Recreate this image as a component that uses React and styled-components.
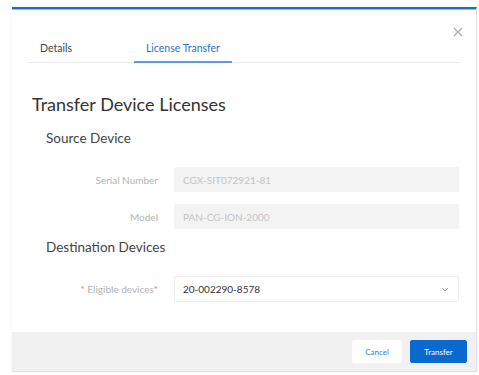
import React from "react";
import styled, { createGlobalStyle } from "styled-components";

const Global = createGlobalStyle`
  html, body { margin: 0; padding: 0; background: #fff; }
  body { font-family: Lato, "Open Sans", sans-serif; }
  * { box-sizing: border-box; }
`;

const Page = styled.div`
  width: 479px;
  height: 375px;
  padding: 7px 2px 0 12px;
  background: #fff;
`;

const Modal = styled.div`
  width: 465px;
  border-top: 2px solid #1b6dcc;
  border-right: 1px solid #e2e2e2;
  box-shadow: 0 1px 1px rgba(0, 0, 0, 0.12), inset 0 1px 0 #8fb9ea;
  background: #fff;
  display: flex;
  flex-direction: column;
`;

const CloseRow = styled.div`
  display: flex;
  justify-content: flex-end;
  padding: 17px 12px 0 0;
  height: 28px;
`;

const CloseButton = styled.button`
  border: 0;
  background: none;
  padding: 0;
  width: 12px;
  height: 12px;
  display: flex;
  align-items: center;
  justify-content: center;
  cursor: pointer;
`;

const TabBar = styled.div`
  display: flex;
  gap: 50px;
  margin: 0 16px;
  border-bottom: 1px solid #ececec;
  height: 26px;
`;

const Tab = styled.div`
  padding: 0 12px;
  font-size: 10.5px;
  line-height: 22px;
  color: ${(p) => (p.$active ? "#2c72d0" : "#444")};
  border-bottom: 2px solid ${(p) => (p.$active ? "#5c9be3" : "transparent")};
  width: ${(p) => (p.$active ? "98px" : "auto")};
  white-space: nowrap;
  text-align: center;
  margin-bottom: -1px;
`;

const Body = styled.div`
  padding: 30px 17px 30px 20px;
`;

const Title = styled.h2`
  margin: 0;
  font-size: 18px;
  line-height: 22px;
  font-weight: 400;
  color: #333;
`;

const Section = styled.h3`
  margin: ${(p) => p.$mt || "14px"} 0 0 14px;
  font-size: 13.5px;
  line-height: 16px;
  font-weight: 400;
  color: #444;
`;

const Form = styled.div`
  display: flex;
  flex-direction: column;
  gap: 12px;
  margin-top: ${(p) => p.$mt || "22px"};
`;

const Row = styled.div`
  display: grid;
  grid-template-columns: 126px 1fr;
  gap: 16px;
  align-items: center;
`;

const Label = styled.label`
  text-align: right;
  font-size: 10px;
  color: #b3b3b3;
  white-space: nowrap;
`;

const Req = styled.span`
  color: #f08080;
`;

const ReadOnly = styled.div`
  height: 25px;
  background: #f3f3f3;
  border-radius: 2px;
  padding: 0 9px;
  display: flex;
  align-items: center;
  font-size: 10px;
  color: #c4c4c4;
`;

const Select = styled.div`
  height: 26px;
  background: #fff;
  border: 1px solid #ececec;
  border-radius: 2px;
  padding: 0 9px 0 8px;
  display: flex;
  align-items: center;
  justify-content: space-between;
  font-size: 10px;
  color: #333;
`;

const Footer = styled.div`
  height: 39px;
  background: #f1f1f1;
  display: flex;
  justify-content: flex-end;
  align-items: center;
  gap: 8px;
  padding: 0 9px 0 0;
`;

const Button = styled.button`
  height: 23px;
  padding: 0 ${(p) => (p.$primary ? "10px" : "12px")};
  border-radius: 2px;
  border: 1px solid ${(p) => (p.$primary ? "#0b68cf" : "#fff")};
  background: ${(p) => (p.$primary ? "#0b68cf" : "#fff")};
  color: ${(p) => (p.$primary ? "#fff" : "#3c7fd6")};
  font-family: Lato, sans-serif;
  font-size: 8px;
  min-width: ${(p) => (p.$primary ? "57px" : "50px")};
`;

export default function App() {
  return (
    <Page>
      <Global />
      <Modal>
        <CloseRow>
          <CloseButton aria-label="Close">
            <svg width="10" height="10" viewBox="0 0 10 10">
              <path d="M1 1L9 9M9 1L1 9" stroke="#a8a8a8" strokeWidth="1.1" />
            </svg>
          </CloseButton>
        </CloseRow>
        <TabBar>
          <Tab>Details</Tab>
          <Tab $active>License Transfer</Tab>
        </TabBar>
        <Body>
          <Title>Transfer Device Licenses</Title>
          <Section $mt="15px">Source Device</Section>
          <Form $mt="21px">
            <Row>
              <Label>Serial Number</Label>
              <ReadOnly>CGX-SIT072921-81</ReadOnly>
            </Row>
            <Row>
              <Label>Model</Label>
              <ReadOnly>PAN-CG-ION-2000</ReadOnly>
            </Row>
          </Form>
          <Section $mt="10px">Destination Devices</Section>
          <Form $mt="21px">
            <Row>
              <Label>
                <Req>* </Req>Eligible devices<Req>*</Req>
              </Label>
              <Select>
                <span>20-002290-8578</span>
                <svg width="8" height="5" viewBox="0 0 8 5">
                  <path d="M1 1L4 4L7 1" stroke="#999" strokeWidth="1" fill="none" />
                </svg>
              </Select>
            </Row>
          </Form>
        </Body>
        <Footer>
          <Button>Cancel</Button>
          <Button $primary>Transfer</Button>
        </Footer>
      </Modal>
    </Page>
  );
}
